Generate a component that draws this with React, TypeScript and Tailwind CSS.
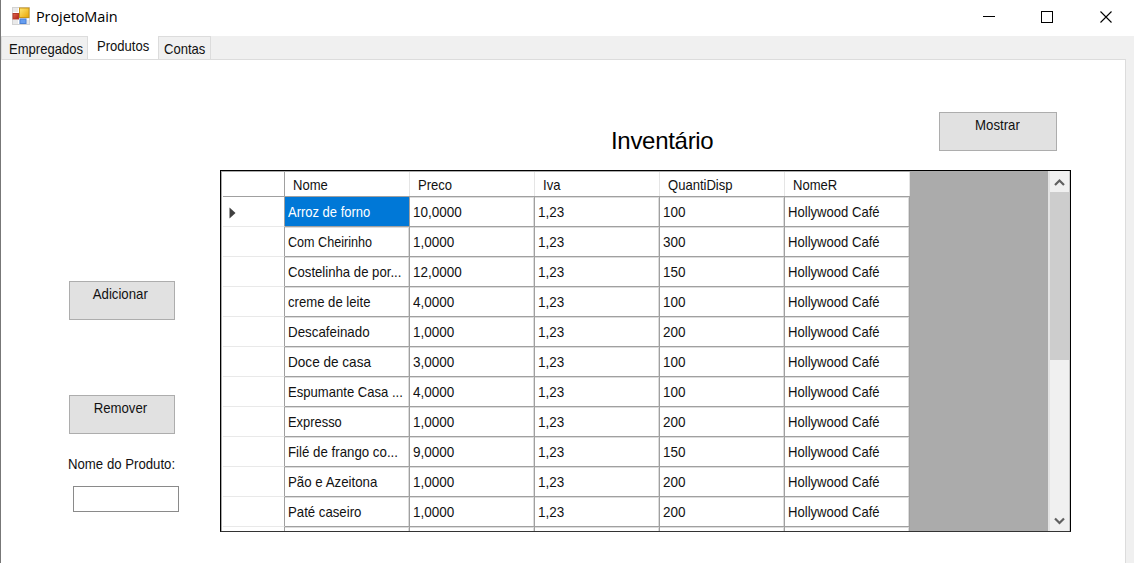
import React from "react";

const columns = ["Nome", "Preco", "Iva", "QuantiDisp", "NomeR"];

const products = [
  ["Arroz de forno", "10,0000", "100", "scale-x-[0.865]"],
  ["Com Cheirinho", "1,0000", "300", "scale-x-[0.84]"],
  ["Costelinha de por...", "12,0000", "150", "scale-x-[0.877]"],
  ["creme de leite", "4,0000", "100", "scale-x-[0.875]"],
  ["Descafeinado", "1,0000", "200", "scale-x-[0.89]"],
  ["Doce de casa", "3,0000", "100", "scale-x-[0.905]"],
  ["Espumante Casa ...", "4,0000", "100", "scale-x-[0.872]"],
  ["Expresso", "1,0000", "200", "scale-x-[0.86]"],
  ["Filé de frango co...", "9,0000", "150", "scale-x-[0.885]"],
  ["Pão e Azeitona", "1,0000", "200", "scale-x-[0.885]"],
  ["Paté caseiro", "1,0000", "200", "scale-x-[0.88]"],
];

/* Condensed interface text, anchored at its left edge unless told otherwise. */
function Text({ children, className = "origin-left scale-x-[0.87]" }: { children: React.ReactNode; className?: string }) {
  return <span className={`inline-block whitespace-nowrap ${className}`}>{children}</span>;
}

function AppIcon() {
  return (
    <svg width="18" height="18" viewBox="0 0 18 18" className="ml-[11px] shrink-0">
      <defs>
        <linearGradient id="gold" x1="0" y1="0" x2="1" y2="1">
          <stop offset="0" stopColor="#ffe978" />
          <stop offset="1" stopColor="#e9a400" />
        </linearGradient>
        <linearGradient id="red" x1="0" y1="0" x2="1" y2="1">
          <stop offset="0" stopColor="#e06a52" />
          <stop offset="1" stopColor="#b31e12" />
        </linearGradient>
      </defs>
      <rect x="0.5" y="0.5" width="17" height="17" fill="#e9e9e9" stroke="#d3d3d3" />
      <path d="M1 5.500h6M6.500 1v16M1 12.500h16" stroke="#fff" />
      <rect x="7.500" y="1" width="9.500" height="9.500" fill="url(#gold)" stroke="#c99416" />
      <rect x="1" y="6.500" width="5.500" height="5.500" fill="url(#red)" stroke="#b33a2a" />
      <rect x="8" y="12" width="6" height="4.500" fill="#659df0" stroke="#4b80d3" />
    </svg>
  );
}

function TitleBar() {
  return (
    <header className="flex h-9 shrink-0 items-center bg-white pb-1">
      <AppIcon />
      <span className="ml-[6px] mt-px font-['Open_Sans','Noto_Sans',sans-serif] text-[14.5px] tracking-[-0.1px] text-black">
        ProjetoMain
      </span>
      <svg width="152" height="32" viewBox="0 0 152 32" className="ml-auto" fill="none" stroke="#000">
        <path d="M1 16.500h12M59.500 11.500h11v11h-11z" shapeRendering="crispEdges" />
        <path d="M118.500 11.500l11 11M129.500 11.500l-11 11" strokeWidth="1.1" />
      </svg>
    </header>
  );
}

function Tabs() {
  return (
    <nav className="flex h-[23px] shrink-0 bg-[#f0f0f0] text-[15px] leading-[23px]">
      <div className="w-[87px] border border-b-0 border-[#dcdcdc] pl-[6.5px]">
        <Text>Empregados</Text>
      </div>
      <div className="w-[70px] bg-white pl-[9px] leading-[20px]">
        <Text>Produtos</Text>
      </div>
      <div className="w-[53px] border border-b-0 border-[#dcdcdc] pl-[5px]">
        <Text>Contas</Text>
      </div>
    </nav>
  );
}

function Button({ label, className }: { label: string; className: string }) {
  return (
    <button
      className={`flex h-[39px] items-start justify-center border border-[#adadad] bg-[#e1e1e1] pt-[2px] text-[15px] leading-[20px] ${className}`}
    >
      <Text className="scale-x-[0.88]">{label}</Text>
    </button>
  );
}

function Grid() {
  return (
    <div className="flex h-[362px] w-[851px] overflow-hidden border border-b-[#333] border-l-black border-r-black border-t-black bg-[#ababab]">
      <div className="w-[689px] shrink-0 border-l border-t border-[#ababab] bg-white pl-px text-[15px]">
        <div className="flex h-[25px] border-b border-[#a0a0a0] bg-white">
          <div className="w-[62px] shrink-0 border-r border-[#a0a0a0]" />
          {columns.map((name) => (
            <div key={name} className="w-[125px] border-r border-[#e5e5e5] pl-[8px] leading-[26px]">
              <Text>{name}</Text>
            </div>
          ))}
        </div>
        {products.map(([name, price, quantity, nameScale], index) => (
          <div key={name} className="flex h-[30px] bg-white">
            <div className="flex w-[62px] shrink-0 items-center border-b border-r border-b-[#e9e9e9] border-r-[#a0a0a0] pl-[6px]">
              {index === 0 && (
                <svg width="7" height="12" viewBox="0 0 7 12" className="mt-[2px]">
                  <path d="M0.500 0.500L6.500 6L0.500 11.500z" fill="#404040" />
                </svg>
              )}
            </div>
            {[name, price, "1,23", quantity, "Hollywood Café"].map((value, column) => (
              <div
                key={column}
                className={`w-[125px] border-b border-r border-[#a0a0a0] pl-[3px] leading-[30px] ${
                  index === 0 && column === 0
                    ? "bg-[#0078d7] text-white"
                    : "bg-white shadow-[inset_-1px_1px_0_#dcdcdc]"
                }`}
              >
                <Text
                  className={`origin-left ${
                    column === 0 ? nameScale : column === 4 ? "scale-x-[0.872]" : "scale-x-[0.9]"
                  }`}
                >
                  {value}
                </Text>
              </div>
            ))}
          </div>
        ))}
        <div className="flex h-[5px] bg-white">
          <div className="w-[62px] shrink-0 border-r border-[#a0a0a0]" />
          {columns.map((name) => (
            <div key={name} className="w-[125px] border-r border-[#a0a0a0] shadow-[inset_-1px_1px_0_#dcdcdc]" />
          ))}
        </div>
      </div>
      <div className="ml-auto flex w-[22px] flex-col border-l-2 border-r border-l-[#e3e3e3] border-r-[#c8c8c8] bg-[#f0f0f0]">
        <svg width="19" height="21" viewBox="0 0 19 21" className="shrink-0">
          <path d="M5 14l4.500-4.500L14 14" fill="none" stroke="#606060" strokeWidth="2.2" />
        </svg>
        <div className="h-[168px] w-[19px] shrink-0 bg-[#cdcdcd]" />
        <svg width="19" height="21" viewBox="0 0 19 21" className="mt-auto shrink-0">
          <path d="M5 8.500l4.500 4.500L14 8.500" fill="none" stroke="#606060" strokeWidth="2.2" />
        </svg>
      </div>
    </div>
  );
}

export default function App() {
  return (
    <div className="flex h-[563px] w-[1134px] flex-col overflow-hidden border-l border-[#777] bg-[#f0f0f0] font-['Liberation_Sans',Arial,sans-serif] text-[#111]">
      <TitleBar />
      <Tabs />
      <main className="flex w-[1125px] flex-1 border-r border-t border-[#dcdcdc] bg-white">
        <aside className="flex w-[219px] shrink-0 flex-col pl-[68px] pt-[221px]">
          <Button label="Adicionar" className="w-[106px] pr-[3px]" />
          <Button label="Remover" className="mt-[75px] w-[106px] pr-[3px]" />
          <label className="-ml-px mt-[20px] text-[15px] leading-[20px]">
            <Text className="origin-left scale-x-[0.88]">Nome do Produto:</Text>
          </label>
          <input className="ml-[4px] mt-[12px] h-[26px] w-[106px] border border-[#8a8a8a] bg-white px-1 outline-none" />
        </aside>
        <section className="flex flex-col">
          <div className="flex h-[110px] shrink-0">
            <h1 className="ml-[391px] mt-[67px] w-[328px] text-[24px] leading-[28px] tracking-[-0.3px] text-black">
              Inventário
            </h1>
            <Button label="Mostrar" className="mt-[52px] w-[118px] pr-px" />
          </div>
          <Grid />
        </section>
      </main>
    </div>
  );
}
